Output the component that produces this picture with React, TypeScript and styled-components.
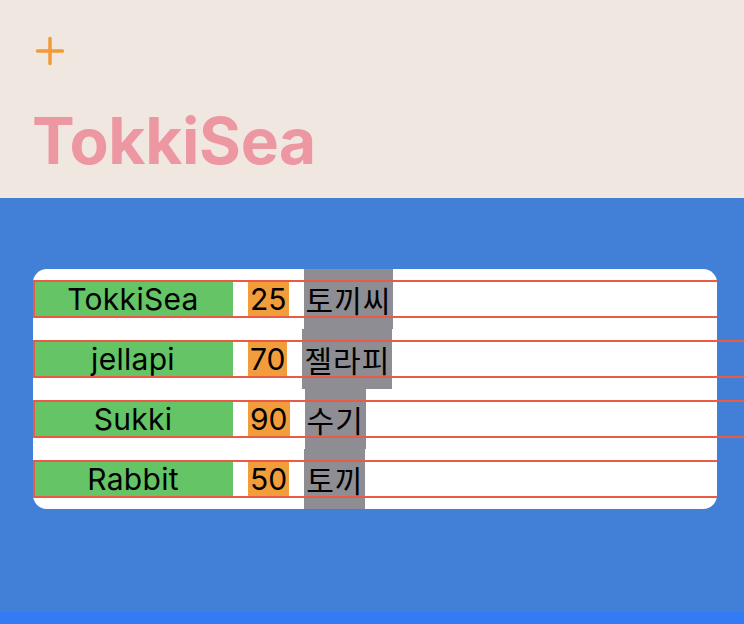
import styled, {createGlobalStyle} from 'styled-components';

const GlobalStyle = createGlobalStyle`
  html, body {
    margin: 0;
    padding: 0;
    background: #4280d8;
  }

  body {
    font-family: Inter, 'Noto Sans CJK KR', sans-serif;
    overflow: hidden;
  }
`;

const Screen = styled.div`
  display: flex;
  flex-direction: column;
  height: 624px;
  width: 744px;
`;

const Header = styled.header`
  background: #f0e8e0;
  box-sizing: border-box;
  display: flex;
  flex-direction: column;
  height: 198px;
  padding: 36px 0 0 35px;
`;

const AddButton = styled.button`
  background: none;
  border: 0;
  cursor: pointer;
  display: flex;
  padding: 0;
  width: 32px;
`;

const Title = styled.h1`
  color: #ec97a1;
  font-size: 64px;
  font-weight: 700;
  letter-spacing: -0.3px;
  line-height: 1;
  margin: 43px 0 0 -3px;
`;

const Content = styled.main`
  background: #4280d8;
  flex: 1;
  padding: 71px 27px 0 33px;
`;

const HomeBar = styled.div`
  background: #337bf5;
  height: 12px;
`;

const Card = styled.ol`
  background: #fff;
  border-radius: 14px;
  list-style-type: none;
  margin: 0;
  padding: 0;
`;

const Slot = styled.li<{$wide?: boolean}>`
  align-items: center;
  display: flex;
  height: 60px;
  position: relative;

  &::after {
    border: 2px solid #ea5a45;
    border-right: none;
    box-sizing: border-box;
    content: '';
    height: 38px;
    left: 0;
    pointer-events: none;
    position: absolute;
    right: ${({$wide}) => ($wide ? '-40px' : '0')};
    top: 11px;
  }
`;

const Name = styled.span`
  align-items: center;
  background: #65c466;
  display: flex;
  font-size: 30px;
  height: 36px;
  justify-content: center;
  letter-spacing: 0.3px;
  width: 200px;
`;

const Score = styled.span`
  align-items: center;
  background: #f29d3b;
  display: flex;
  font-size: 30px;
  height: 38px;
  margin-left: 15px;
  padding: 0 2px;
`;

const Nickname = styled.span`
  align-self: stretch;
  align-items: center;
  background: #8e8d93;
  display: flex;
  font-family: 'Noto Sans CJK KR', sans-serif;
  font-size: 30px;
  letter-spacing: 1px;
  margin-left: 15px;
  padding: 0 2px;
`;

interface Friend {
  name: string;
  score: number;
  nickname: string;
  wide?: boolean;
}

const friends: Friend[] = [
  {name: 'TokkiSea', score: 25, nickname: '토끼씨'},
  {name: 'jellapi', score: 70, nickname: '젤라피', wide: true},
  {name: 'Sukki', score: 90, nickname: '수기', wide: true},
  {name: 'Rabbit', score: 50, nickname: '토끼'},
];

function PlusIcon() {
  return (
    <svg width="30" height="30" viewBox="0 0 30 30" fill="none">
      <path
        d="M15 2.5v25M2.5 15h25"
        stroke="#f19a37"
        strokeWidth="3.5"
        strokeLinecap="round"
      />
    </svg>
  );
}

function App() {
  return (
    <Screen>
      <GlobalStyle />
      <Header>
        <AddButton aria-label="Add">
          <PlusIcon />
        </AddButton>
        <Title>TokkiSea</Title>
      </Header>
      <Content>
        <Card>
          {friends.map(({name, score, nickname, wide}) => (
            <Slot key={name} $wide={wide}>
              <Name>{name}</Name>
              <Score>{score}</Score>
              <Nickname>{nickname}</Nickname>
            </Slot>
          ))}
        </Card>
      </Content>
      <HomeBar />
    </Screen>
  );
}

export default App;
